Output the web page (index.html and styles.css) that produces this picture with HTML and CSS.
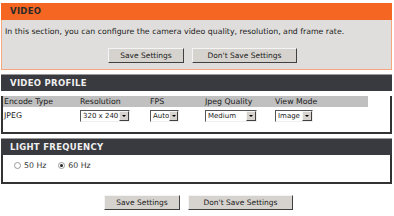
FILE: index.html
```html
<!DOCTYPE html>
<html lang="en">
<head>
  <meta charset="UTF-8" />
  <title>Video</title>
  <link rel="stylesheet" href="styles.css">
</head>
<body>
  <div class="box box-main">
    <div class="head head-orange">VIDEO</div>
    <div class="main-body">
      <p class="intro">In this section, you can configure the camera video quality, resolution, and frame rate.</p>
      <div class="buttons">
        <button class="btn btn-save">Save Settings</button>
        <button class="btn btn-nosave">Don't Save Settings</button>
      </div>
    </div>
  </div>

  <div class="box">
    <div class="head">VIDEO PROFILE</div>
    <div class="box-body">
      <table class="profile">
        <tr class="row-head">
          <td class="c1">Encode Type</td>
          <td class="c2">Resolution</td>
          <td class="c3">FPS</td>
          <td class="c4">Jpeg Quality</td>
          <td class="c5">View Mode</td>
        </tr>
        <tr class="row-data">
          <td>JPEG</td>
          <td><span class="select w-res">320 x 240<span class="arrow"></span></span></td>
          <td><span class="select w-fps">Auto<span class="arrow"></span></span></td>
          <td><span class="select w-qual">Medium<span class="arrow"></span></span></td>
          <td><span class="select w-mode">Image<span class="arrow"></span></span></td>
        </tr>
      </table>
    </div>
  </div>

  <div class="box">
    <div class="head">LIGHT FREQUENCY</div>
    <div class="box-body freq">
      <label class="radio"><span class="dot"></span>50 Hz</label>
      <label class="radio"><span class="dot on"></span>60 Hz</label>
    </div>
  </div>

  <div class="buttons bottom">
    <button class="btn btn-save">Save Settings</button>
    <button class="btn btn-nosave">Don't Save Settings</button>
  </div>
</body>
</html>
```

FILE: styles.css
```css
* {
  box-sizing: border-box;
}

body {
  margin: 0;
  padding: 3px 2px 0 1px;
  font-family: Tahoma, "DejaVu Sans", sans-serif;
  font-size: 7.8px;
  color: #1a1a1a;
  background: #fff;
}

.box {
  margin-bottom: 4px;
}

.head {
  height: 17px;
  line-height: 17px;
  padding-left: 9px;
  background: #393a3f;
  color: #f0f0f0;
  font-weight: bold;
  font-size: 8.5px;
  letter-spacing: 0.3px;
  border-top: 1px solid #9a9a9a;
}

.head-orange {
  background: #f46622;
  color: #2a2a2a;
  border-top: none;
}

.main-body {
  background: #dfdedc;
  border: 1px solid #f6a57c;
  border-top: none;
  height: 50px;
  padding: 6px 3px 0;
}

.intro {
  margin: 0;
  line-height: 11px;
}

.buttons {
  display: flex;
  gap: 8px;
  padding-left: 103px;
  margin-top: 11px;
}

.btn {
  height: 15px;
  padding: 0;
  font-family: inherit;
  font-size: 7.5px;
  color: #1a1a1a;
  background: #d6d3ce;
  border: 1px solid;
  border-color: #f4f4f4 #404040 #404040 #f4f4f4;
}

.btn-save { width: 76px; }
.btn-nosave { width: 105px; }

.box-body {
  border: 2px solid #333;
  border-top: none;
  background: #fff;
}

.profile {
  border-collapse: collapse;
  margin: 5px 0 9px 0;
}

.profile td {
  padding: 0 0 0 1px;
}

.row-head td {
  background: #c0c0c0;
  height: 11px;
}

.row-data td {
  height: 16px;
  padding-top: 1px;
}

.c1 { width: 76px; }
.c2 { width: 70px; }
.c3 { width: 55px; }
.c4 { width: 70px; }
.c5 { width: 94px; }

.select {
  display: inline-flex;
  align-items: center;
  justify-content: space-between;
  height: 12px;
  padding-left: 2px;
  font-size: 7px;
  border: 1px solid;
  border-color: #555 #eee #eee #555;
  background: #fff;
  vertical-align: middle;
}

.arrow {
  width: 10px;
  height: 10px;
  background: #d6d3ce;
  border: 1px solid;
  border-color: #f4f4f4 #404040 #404040 #f4f4f4;
  position: relative;
}

.arrow::after {
  content: "";
  position: absolute;
  left: 2px;
  top: 3px;
  border-left: 2px solid transparent;
  border-right: 2px solid transparent;
  border-top: 2px solid #000;
}

.w-res { width: 50px; }
.w-fps { width: 29px; }
.w-qual { width: 52px; }
.w-mode { width: 38px; }

.freq {
  height: 29px;
  padding: 6px 0 0 11px;
  display: flex;
  gap: 12px;
}

.radio {
  display: flex;
  align-items: flex-start;
  gap: 3px;
  color: #333;
}

.dot {
  width: 7px;
  height: 7px;
  border-radius: 50%;
  border: 1px solid #999;
  background: #fff;
  margin-top: 1px;
  position: relative;
}

.dot.on::after {
  content: "";
  position: absolute;
  left: 1px;
  top: 1px;
  width: 3px;
  height: 3px;
  border-radius: 50%;
  background: #222;
}

.bottom {
  margin-top: 11px;
}
```
